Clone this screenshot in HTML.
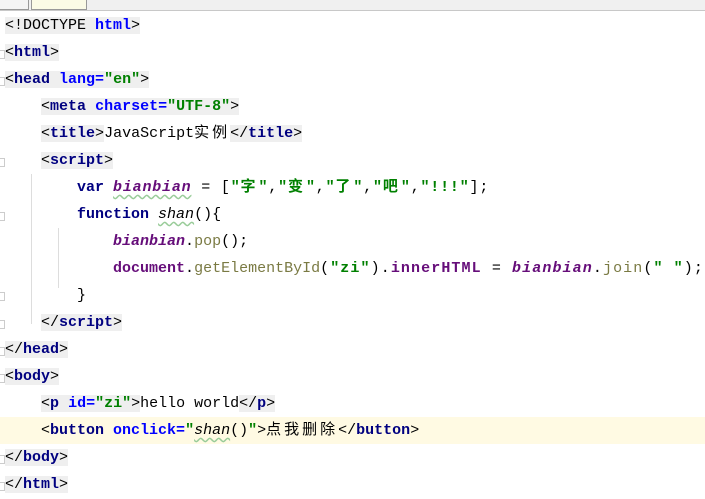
<!DOCTYPE html>
<html><head><meta charset="utf-8"><style>
body{margin:0;width:705px;height:494px;background:#fff;overflow:hidden;position:relative;font-family:"Liberation Mono","Noto Sans CJK SC",monospace;font-size:15px}
.tb{position:absolute;left:0;top:0;width:705px;height:10px;background:#f0f0f0;border-bottom:1px solid #c8c8c8}
.t1{position:absolute;left:-2px;top:-2px;width:29px;height:10px;border:1px solid #999;background:#f4f4f4}
.t2{position:absolute;left:31px;top:-2px;width:54px;height:10px;border:1px solid #999;background:#fbfbe6}
.l{position:absolute;left:5px;height:27px;line-height:28px;white-space:pre;color:#000}
.g{background:#efefef}
.tg{color:#000080;font-weight:bold}
.at{color:#0000ff;font-weight:bold}
.s{color:#008000;font-weight:bold}
.kw{color:#000080;font-weight:bold}
.v{color:#660e7a;font-weight:bold;font-style:italic}
.f{color:#000;font-style:italic;text-decoration:underline wavy #9c9;text-underline-offset:3px}
.m{color:#7a7a43}
.p{color:#660e7a;font-weight:bold}
.c{letter-spacing:3px}
.hl{position:absolute;left:0;top:417px;width:705px;height:27px;background:#fffae3}
.gd{position:absolute;width:1px;background:#ddd}
.fold{position:absolute;left:0;width:4px;height:7px;border:1px solid #ccc;border-left:none}
</style></head><body>
<div class="tb"><div class="t1"></div><div class="t2"></div></div>
<div class="hl"></div>
<div class="gd" style="left:31px;top:174px;height:150px"></div>
<div class="gd" style="left:58px;top:228px;height:60px"></div>
<div class="fold" style="top:50px"></div><div class="fold" style="top:77px"></div><div class="fold" style="top:158px"></div><div class="fold" style="top:212px"></div><div class="fold" style="top:292px"></div><div class="fold" style="top:320px"></div><div class="fold" style="top:347px"></div><div class="fold" style="top:374px"></div><div class="fold" style="top:455px"></div><div class="fold" style="top:482px"></div>
<div class="l" style="top:12px"><span class="g">&lt;!DOCTYPE <span class="at">html</span>&gt;</span></div>
<div class="l" style="top:39px"><span class="g">&lt;<span class="tg">html</span>&gt;</span></div>
<div class="l" style="top:66px"><span class="g">&lt;<span class="tg">head</span> <span class="at">lang=</span><span class="s">"en"</span>&gt;</span></div>
<div class="l" style="top:93px">    <span class="g">&lt;<span class="tg">meta</span> <span class="at">charset=</span><span class="s">"UTF-8"</span>&gt;</span></div>
<div class="l" style="top:120px">    <span class="g">&lt;<span class="tg">title</span>&gt;</span>JavaScript<span class="c">实例</span><span class="g">&lt;/<span class="tg">title</span>&gt;</span></div>
<div class="l" style="top:147px">    <span class="g">&lt;<span class="tg">script</span>&gt;</span></div>
<div class="l" style="top:174px">        <span class="kw">var</span> <span style="letter-spacing:0.8px"><span class="v" style="text-decoration:underline wavy #9c9;text-underline-offset:3px">bianbian</span> = [<span class="s">"<span class="c">字</span>"</span>,<span class="s">"<span class="c">变</span>"</span>,<span class="s">"<span class="c">了</span>"</span>,<span class="s">"<span class="c">吧</span>"</span>,<span class="s">"!!!"</span>];</span></div>
<div class="l" style="top:201px">        <span class="kw">function</span> <span class="f">shan</span>(){</div>
<div class="l" style="top:228px">            <span class="v">bianbian</span>.<span class="m">pop</span>();</div>
<div class="l" style="top:255px">            <span class="p">document</span>.<span class="m">getElementById</span><span style="letter-spacing:1.1px">(<span class="s">"zi"</span>).<span class="p">innerHTML</span> = <span class="v">bianbian</span>.<span class="m">join</span>(<span class="s">" "</span>);</span></div>
<div class="l" style="top:282px">        }</div>
<div class="l" style="top:309px">    <span class="g">&lt;/<span class="tg">script</span>&gt;</span></div>
<div class="l" style="top:336px"><span class="g">&lt;/<span class="tg">head</span>&gt;</span></div>
<div class="l" style="top:363px"><span class="g">&lt;<span class="tg">body</span>&gt;</span></div>
<div class="l" style="top:390px">    <span class="g">&lt;<span class="tg">p</span> <span class="at">id=</span><span class="s">"zi"</span>&gt;</span>hello world<span class="g">&lt;/<span class="tg">p</span>&gt;</span></div>
<div class="l" style="top:417px">    &lt;<span class="tg">button</span> <span class="at">onclick=</span><span class="s">"</span><span class="f">shan</span>()<span class="s">"</span>&gt;<span class="c">点我删除</span>&lt;/<span class="tg">button</span>&gt;</div>
<div class="l" style="top:444px"><span class="g">&lt;/<span class="tg">body</span>&gt;</span></div>
<div class="l" style="top:471px"><span class="g">&lt;/<span class="tg">html</span>&gt;</span></div>
</body></html>
